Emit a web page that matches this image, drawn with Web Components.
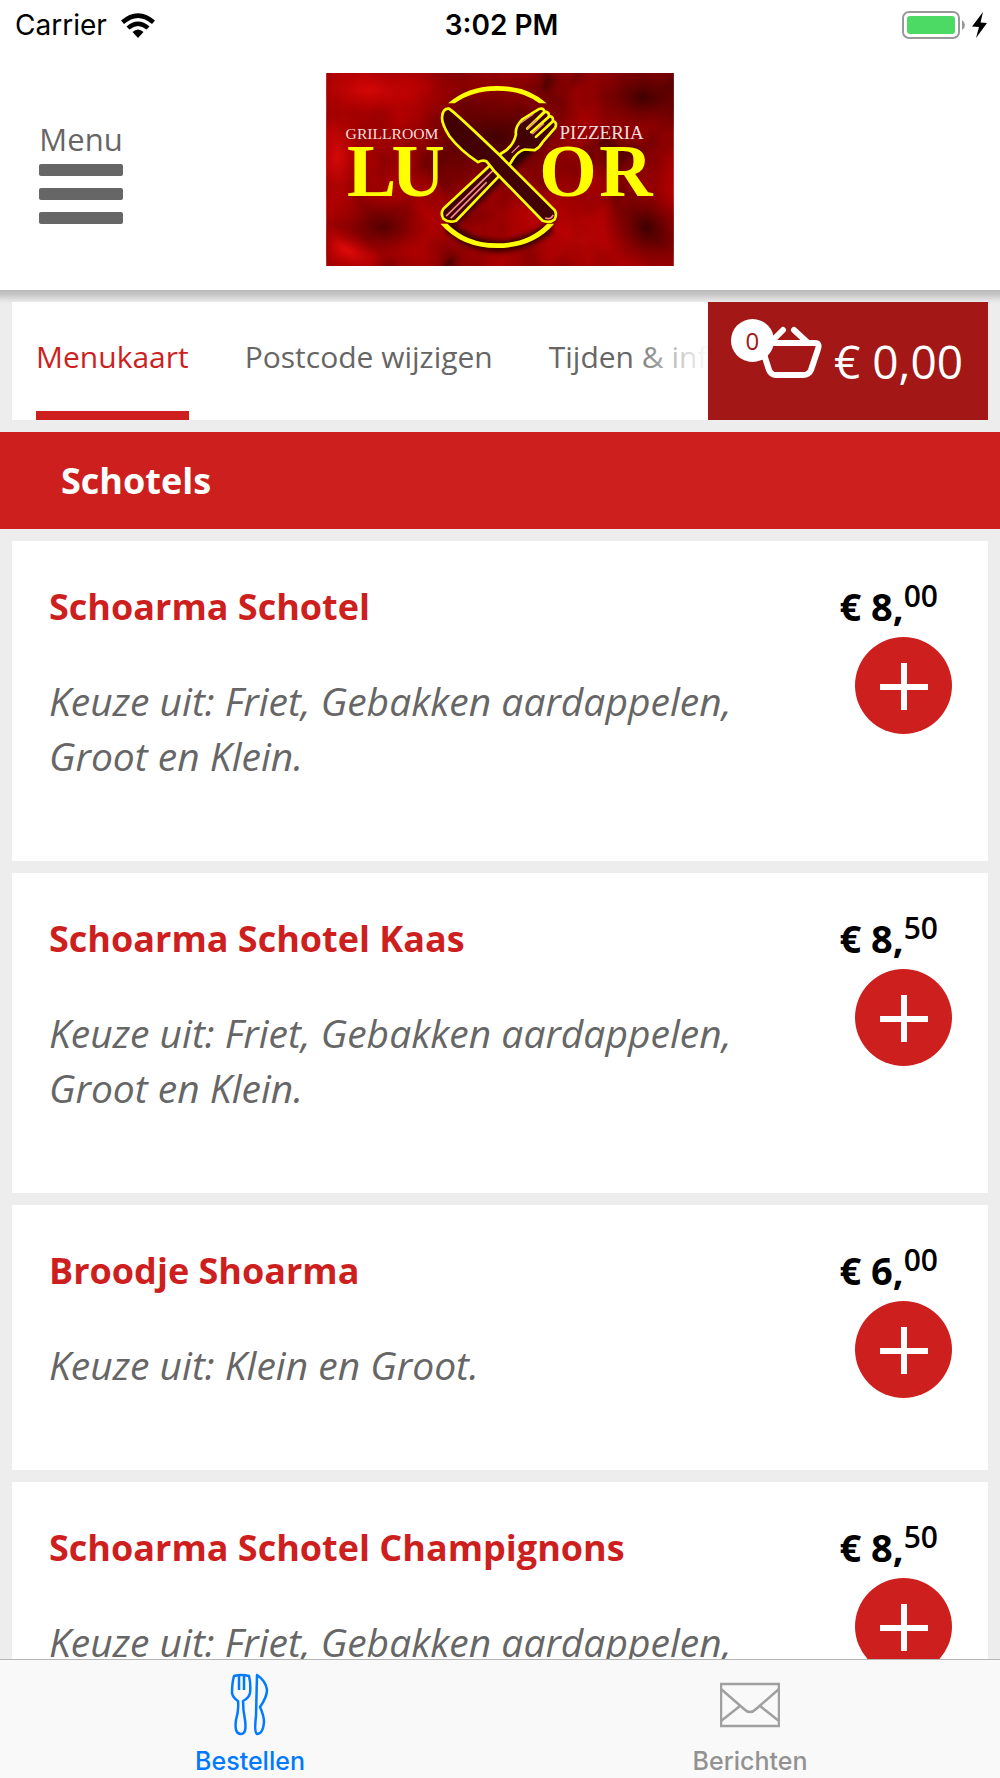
<!DOCTYPE html>
<html lang="nl">
<head>
<meta charset="utf-8">
<meta name="viewport" content="width=device-width, initial-scale=1">
<title>Luxor - Menukaart</title>
<style>
  :root {
    --red: #ce1f1f;
    --dark-red: #a31717;
    --grey: #666;
    --page: #ededed;
  }
  body { margin: 0; background: var(--page); font-family: "Open Sans", "Noto Sans", sans-serif; }
</style>
</head>
<body>
<luxor-app>
  <status-bar slot="top" carrier="Carrier" time="3:02 PM"></status-bar>
  <shop-header slot="top"></shop-header>
  <shop-nav>
    <nav-link href="#menukaart" active>Menukaart</nav-link>
    <nav-link href="#postcode">Postcode wijzigen</nav-link>
    <nav-link href="#info">Tijden &amp; info</nav-link>
    <cart-button slot="cart" count="0">€ 0,00</cart-button>
  </shop-nav>
  <category-title>Schotels</category-title>
  <menu-item euros="8" cents="00">
    <span slot="name">Schoarma Schotel</span>
    Keuze uit: Friet, Gebakken aardappelen, Groot en Klein.
  </menu-item>
  <menu-item euros="8" cents="50">
    <span slot="name">Schoarma Schotel Kaas</span>
    Keuze uit: Friet, Gebakken aardappelen, Groot en Klein.
  </menu-item>
  <menu-item euros="6" cents="00">
    <span slot="name">Broodje Shoarma</span>
    Keuze uit: Klein en Groot.
  </menu-item>
  <menu-item euros="8" cents="50">
    <span slot="name">Schoarma Schotel Champignons</span>
    Keuze uit: Friet, Gebakken aardappelen, Groot en Klein.
  </menu-item>
  <tab-bar slot="bottom">
    <tab-link href="#bestellen" active>
      <svg slot="icon" width="40" height="64" viewBox="0 0 40 64" fill="none" stroke="currentColor" stroke-width="2.500" stroke-linejoin="round">
        <path d="M4 3Q11 1 19 3Q21 11 20 20Q19 25 13 28Q13 37 15 47Q17 61 11 61Q4 61 6 47Q9 37 8 28Q3 25 2 20Q2 10 4 3Z"/>
        <path d="M9 3V17M14 3V17"/>
        <path d="M27 2Q36 8 37 17Q37 24 30 34Q34 43 34 49Q33 61 27 61Q24 59 26 43Z"/>
      </svg>
      Bestellen
    </tab-link>
    <tab-link href="#berichten">
      <svg slot="icon" width="60" height="64" viewBox="0 0 60 64" fill="none" stroke="#a0a0a0" stroke-width="2.500">
        <rect x="1" y="11" width="58" height="42"/>
        <path d="M1 16L24 36Q30 42 36 36L59 16M1 48L20 33M59 48L40 33"/>
      </svg>
      Berichten
    </tab-link>
  </tab-bar>
</luxor-app>

<script>
// Helper: open shadow root filled from a template
function render(el, html) {
  const template = document.createElement("template");
  template.innerHTML = html;
  el.attachShadow({ mode: "open" }).appendChild(template.content.cloneNode(true));
}

// Page frame: fixed top and bottom, scrolling middle
class LuxorApp extends HTMLElement {
  constructor() {
    super();
    render(this, `<style>
      :host { display: flex; flex-direction: column; height: 100vh; }
      main { flex: 1; min-height: 0; overflow-y: auto; scrollbar-width: none;
        display: flex; flex-direction: column; gap: 12px; padding-top: 12px; box-sizing: border-box;
        background: linear-gradient(#b8b8b8, #c4c4c4 4px, #e6e6e6 11px, var(--page) 14px); }
      ::slotted(*) { flex-shrink: 0; }
    </style>
    <slot name="top"></slot>
    <main><slot></slot></main>
    <slot name="bottom"></slot>`);
  }
}
customElements.define("luxor-app", LuxorApp);

class StatusBar extends HTMLElement {
  connectedCallback() {
    render(this, `<style>
      :host { display: grid; grid-template-columns: 1fr auto 1fr; align-items: center;
        height: 50px; padding: 0 12px 0 15px; background: #fff; color: #000;
        font: 400 28px/50px Inter, sans-serif; }
      .left, .right { display: flex; align-items: center; }
      .left { gap: 14px; }
      .right { justify-content: flex-end; gap: 6px; }
      .time { font-weight: 600; }
    </style>
    <div class="left"><span>${this.getAttribute("carrier")}</span>
      <svg width="34" height="25" viewBox="0 0 34 25" aria-hidden="true">
        <path d="M0 7.5Q17-7 34 7.5L31 11Q17-1 3 11Z"/>
        <path d="M5.5 13.5Q17 3.5 28.500 13.500L25.500 16.500Q17 9.500 8.500 16.500Z"/>
        <path d="M11.500 19Q17 14 22.500 19L17 25Z"/>
      </svg>
    </div>
    <span class="time">${this.getAttribute("time")}</span>
    <div class="right">
      <svg width="64" height="28" viewBox="0 0 64 28" aria-hidden="true">
        <rect x="1" y="1" width="56" height="26" rx="6" fill="#fff" stroke="#999" stroke-width="2"/>
        <rect x="5" y="5" width="48" height="18" rx="3" fill="#4cd964"/>
        <path d="M60 9Q63 11 63 14Q63 17 60 19Z" fill="#999"/>
      </svg>
      <svg width="16" height="26" viewBox="0 0 16 26" aria-hidden="true"><path d="M11 0L0 14.500L7 15L4 26L15 11L8.500 10.500Z"/></svg>
    </div>`);
  }
}
customElements.define("status-bar", StatusBar);

// Logo drawn on a 1044x580 canvas
class LuxorLogo extends HTMLElement {
  constructor() {
    super();
    render(this, `<style>
      :host { display: block; }
      svg { display: block; }
      text { font-family: "Liberation Serif", serif; }
    </style>
    <svg width="348" height="193" viewBox="18 38 1044 580" role="img" aria-label="Grillroom Pizzeria Luxor">
      <defs>
        <filter id="smoke" x="0" y="0" width="100%" height="100%">
          <feTurbulence type="fractalNoise" baseFrequency="0.006 0.005" numOctaves="3" seed="8"/>
          <feColorMatrix values="1.8 0 0 0 -0.400  0 0 0 0 0  0 0 0 0 0  0 0 0 0 1"/>
        </filter>
        <filter id="soft"><feGaussianBlur stdDeviation="8"/></filter>
        <radialGradient id="mid"><stop offset="0" stop-color="#2a0000" stop-opacity=".8"/><stop offset="1" stop-color="#500" stop-opacity="0"/></radialGradient>
        <radialGradient id="glow"><stop offset="0" stop-color="#e80c0c" stop-opacity=".9"/><stop offset="1" stop-color="#c00" stop-opacity="0"/></radialGradient>
      </defs>
      <rect x="18" y="38" width="1044" height="580" fill="#8c0000"/>
      <rect x="18" y="38" width="1044" height="580" filter="url(#smoke)" opacity=".35"/>
      <ellipse cx="150" cy="90" rx="200" ry="70" fill="url(#glow)" opacity=".65"/>
      <ellipse cx="50" cy="290" rx="80" ry="170" fill="url(#glow)" opacity=".8"/>
      <ellipse cx="80" cy="570" rx="130" ry="60" fill="url(#glow)" transform="rotate(28 80 570)"/>
      <ellipse cx="780" cy="540" rx="190" ry="100" fill="url(#glow)" opacity=".3"/>
      <ellipse cx="530" cy="230" rx="300" ry="220" fill="url(#mid)"/>
      <ellipse cx="970" cy="110" rx="200" ry="130" fill="url(#mid)"/>
      <ellipse cx="980" cy="500" rx="130" ry="130" fill="url(#mid)"/>
      <ellipse cx="190" cy="500" rx="150" ry="90" fill="url(#mid)" opacity=".8"/>
      <g fill="none" stroke="#180000" stroke-width="34" stroke-linecap="round" filter="url(#soft)" opacity=".75">
        <path d="M400 190L692 474M400 480L680 210M392 506Q530 610 680 510"/>
      </g>
      <g fill="#ff0">
        <path d="M384 129Q444 77 531 77Q622 77 680 129H658Q608 91 531 91Q456 91 404 129Z"/>
        <path d="M361 491H382Q440 550 531 550Q624 550 682 491H703Q640 564 531 564Q424 564 361 491Z"/>
        <text x="80" y="408" font-size="222" font-weight="700">L</text>
        <text x="214" y="408" font-size="222" font-weight="700">U</text>
        <text x="658" y="408" font-size="222" font-weight="700">O</text>
        <text x="838" y="408" font-size="222" font-weight="700">R</text>
      </g>
      <text x="76" y="235" font-size="47" fill="#f5dede">GRILLROOM</text>
      <text x="719" y="237" font-size="57" fill="#f5dede">PIZZERIA</text>
      <g fill="#420000" stroke="#ff0" stroke-width="8" stroke-linejoin="round">
        <path d="M520 306L370 446Q360 460 370 476Q386 490 408 482L540 345L572 308Q592 272 614 268L644 270Q660 262 668 246L706 202Q712 186 700 182L648 230L698 184Q702 170 690 167L634 216L686 170Q690 156 676 154L622 205L672 156Q674 142 658 146L606 178Q584 202 588 222Q580 262 540 282Z"/>
        <path d="M378 468L520 330M392 474L500 366" stroke="#ef8b91" stroke-width="5"/>
        <path d="M600 190L640 162M622 206L650 178M637 222L672 190M575 278L598 256" stroke="#ef8b91" stroke-width="4"/>
        <path d="M366 170Q368 144 386 145Q396 148 540 286L704 450Q712 462 704 478Q690 490 668 482L524 334Q512 318 500 304Q488 298 474 306Q420 270 388 228Q364 190 366 170Z"/>
        <path d="M676 474Q692 480 700 464" stroke="#ef8b91" stroke-width="5" fill="none"/>
      </g>
    </svg>`);
  }
}
customElements.define("luxor-logo", LuxorLogo);

class ShopHeader extends HTMLElement {
  constructor() {
    super();
    render(this, `<style>
      :host { display: grid; grid-template-columns: 1fr auto 1fr; align-items: start;
        height: 240px; padding: 23px 39px 0; background: #fff; box-sizing: border-box; }
      button { justify-self: start; display: flex; flex-direction: column; gap: 12px; width: 84px;
        margin-top: 43px; padding: 0; border: 0; background: none; color: var(--grey);
        font: 400 31px/46px "Open Sans", sans-serif; cursor: pointer; }
      .label { height: 36px; }
      i { display: block; width: 100%; height: 12px; border-radius: 2px; background: var(--grey); }
    </style>
    <button type="button"><span class="label">Menu</span><i></i><i></i><i></i></button>
    <luxor-logo></luxor-logo>`);
  }
}
customElements.define("shop-header", ShopHeader);

class ShopNav extends HTMLElement {
  constructor() {
    super();
    render(this, `<style>
      :host { display: flex; height: 118px; margin: 0 12px; background: #fff; }
      nav { flex: 1; min-width: 0; position: relative; overflow: hidden;
        display: flex; gap: 56px; padding-left: 24px; }
      /* fades out the links that run under the cart */
      nav::after { content: ""; position: absolute; inset: 0 0 0 auto; width: 80px;
        background: linear-gradient(to right, rgba(255,255,255,0), #fff); }
    </style>
    <nav><slot></slot></nav>
    <slot name="cart"></slot>`);
  }
}
customElements.define("shop-nav", ShopNav);

class NavLink extends HTMLElement {
  connectedCallback() {
    render(this, `<style>
      :host { display: block; flex: none; }
      a { display: block; height: 118px; box-sizing: border-box; color: var(--grey);
        font-size: 30px; line-height: 110px; text-decoration: none; white-space: nowrap; }
      :host([active]) a { color: var(--red); border-bottom: 9px solid var(--red); }
    </style>
    <a href="${this.getAttribute("href")}"><slot></slot></a>`);
  }
}
customElements.define("nav-link", NavLink);

class CartButton extends HTMLElement {
  connectedCallback() {
    render(this, `<style>
      :host { display: block; flex: none; }
      button { position: relative; display: flex; align-items: center; gap: 12px; height: 118px;
        padding: 0 25px 0 51px; border: 0; background: var(--dark-red); color: #fff;
        font: 400 46px/118px "Open Sans", sans-serif; cursor: pointer; }
      svg { display: block; margin-bottom: 18px; }
      .count { position: absolute; left: 23px; top: 17px; width: 43px; height: 43px; border-radius: 50%;
        background: #fff; color: var(--dark-red); font-size: 24px; line-height: 43px; text-align: center; }
    </style>
    <button type="button">
      <svg width="63" height="53" viewBox="0 0 63 53" fill="none" stroke="#fff" stroke-width="6" stroke-linecap="round" stroke-linejoin="round" aria-hidden="true">
        <path d="M4 17H56Q61 17 59 23L52 44Q50 49 44 49H17Q12 49 10 44L3 22Q2 17 4 17ZM24 4L11 17M35 4L48 16"/>
      </svg>
      <span><slot></slot></span>
      <span class="count">${this.getAttribute("count")}</span>
    </button>`);
  }
}
customElements.define("cart-button", CartButton);

class CategoryTitle extends HTMLElement {
  constructor() {
    super();
    render(this, `<style>
      :host { display: block; background: var(--red); color: #fff; }
      h2 { margin: 0; padding: 0 61px; font-size: 36px; line-height: 97px; font-weight: 700; }
    </style>
    <h2><slot></slot></h2>`);
  }
}
customElements.define("category-title", CategoryTitle);

// <menu-item euros="8" cents="50">: name in its slot, description as content
class MenuItem extends HTMLElement {
  connectedCallback() {
    render(this, `<style>
      :host { display: flex; justify-content: space-between; margin: 0 12px;
        padding: 38px 36px 78px 37px; background: #fff; line-height: 55px; }
      .text { flex: 1; min-width: 0; max-width: 720px; }
      h3 { margin: 0 0 39px; font-size: 36px; font-weight: 700; color: var(--red); }
      p { margin: 0; font-size: 39px; font-style: italic; color: var(--grey); }
      .buy { display: flex; flex-direction: column; align-items: flex-end; gap: 3px; height: 145px; }
      .price { padding-right: 14px; color: #000; font-size: 38px; font-weight: 700; white-space: nowrap; }
      sup { font-size: 30px; line-height: 0; font-weight: 600; vertical-align: 14px; }
      button { width: 97px; height: 97px; flex: none; padding: 0; border: 0; border-radius: 50%; background: var(--red); cursor: pointer; }
      svg { display: block; margin: auto; }
    </style>
    <div class="text">
      <h3><slot name="name"></slot></h3>
      <p><slot></slot></p>
    </div>
    <div class="buy">
      <span class="price">€ ${this.getAttribute("euros")},<sup>${this.getAttribute("cents")}</sup></span>
      <button type="button" aria-label="Toevoegen">
        <svg width="48" height="48" viewBox="0 0 48 48" stroke="#fff" stroke-width="6"><path d="M0 25H48M24 1V48"/></svg>
      </button>
    </div>`);
  }
}
customElements.define("menu-item", MenuItem);

class TabBar extends HTMLElement {
  constructor() {
    super();
    render(this, `<style>
      :host { display: flex; height: 119px; box-sizing: border-box; background: #f9f9f9; border-top: 1px solid #b5b5b5; }
      ::slotted(*) { flex: 1; }
    </style>
    <slot></slot>`);
  }
}
customElements.define("tab-bar", TabBar);

class TabLink extends HTMLElement {
  connectedCallback() {
    render(this, `<style>
      :host { display: block; }
      a { display: flex; flex-direction: column; align-items: center; gap: 8px; padding-top: 13px;
        color: #929292; font: 500 25px/32px Inter, sans-serif; text-decoration: none; }
      :host([active]) a { color: #007aff; }
    </style>
    <a href="${this.getAttribute("href")}"><slot name="icon"></slot><span><slot></slot></span></a>`);
  }
}
customElements.define("tab-link", TabLink);
</script>
</body>
</html>
